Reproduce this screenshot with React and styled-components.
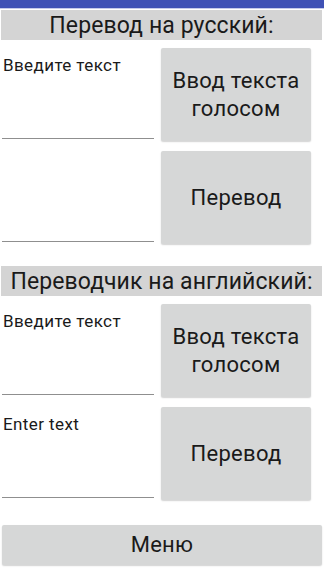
import React from "react";
import styled, { createGlobalStyle } from "styled-components";

const Global = createGlobalStyle`
  html, body { margin: 0; padding: 0; background: #ffffff; }
  body { font-family: Roboto, "Noto Sans", "Liberation Sans", sans-serif; }
  * { box-sizing: border-box; }
`;

const Page = styled.div`
  width: 324px;
  height: 576px;
  background: #ffffff;
  display: flex;
  flex-direction: column;
  overflow: hidden;
`;

const StatusBar = styled.div`
  height: 9px;
  background: #3f51b5;
  border-bottom: 1px solid #c5cae9;
`;

const Section = styled.section`
  display: flex;
  flex-direction: column;
  margin-top: ${(p) => p.$top}px;
`;

const Header = styled.div`
  height: 30px;
  margin: 0 2px 0 1px;
  background: #d4d4d4;
  color: #1a1a1a;
  font-size: 23px;
  letter-spacing: 0.1px;
  line-height: 31px;
  text-align: center;
`;

const Row = styled.div`
  display: grid;
  grid-template-columns: 152px 150px;
  column-gap: 7px;
  padding-left: 2px;
  height: 94px;
  margin-top: ${(p) => p.$top}px;
`;

const Field = styled.div`
  display: flex;
  flex-direction: column;
  justify-content: space-between;
  height: 91px;
  border-bottom: 1px solid #8f8f8f;
`;

const Label = styled.div`
  padding: 6px 0 0 1px;
  font-size: 17px;
  letter-spacing: 0.4px;
  line-height: 22px;
  color: #1a1a1a;
`;

const Button = styled.div`
  display: flex;
  align-items: center;
  justify-content: center;
  text-align: center;
  background: #d6d7d7;
  border-radius: 2px;
  box-shadow: 0 1px 1.5px rgba(0, 0, 0, 0.18);
  color: #1a1a1a;
  font-size: 22px;
  letter-spacing: 0.3px;
  line-height: 28px;
  height: ${(p) => p.$h || 93}px;
`;

const MenuButton = styled(Button)`
  margin: 0 2px 0 2px;
`;

const Footer = styled.div`
  margin-top: 24px;
  display: flex;
  flex-direction: column;
`;

function TranslateRow({ top, label, action }) {
  return (
    <Row $top={top}>
      <Field>
        <Label>{label}</Label>
      </Field>
      <Button>{action}</Button>
    </Row>
  );
}

function TranslatorSection({ top, title, labels }) {
  return (
    <Section $top={top}>
      <Header>{title}</Header>
      <TranslateRow
        top={8}
        label={labels[0]}
        action={
          <span>
            Ввод текста
            <br />
            голосом
          </span>
        }
      />
      <TranslateRow top={9} label={labels[1]} action="Перевод" />
    </Section>
  );
}

export default function App() {
  return (
    <Page>
      <Global />
      <StatusBar />
      <TranslatorSection
        top={1}
        title="Перевод на русский:"
        labels={["Введите текст", ""]}
      />
      <TranslatorSection
        top={21}
        title="Переводчик на английский:"
        labels={["Введите текст", "Enter text"]}
      />
      <Footer>
        <MenuButton $h={40}>Меню</MenuButton>
      </Footer>
    </Page>
  );
}
